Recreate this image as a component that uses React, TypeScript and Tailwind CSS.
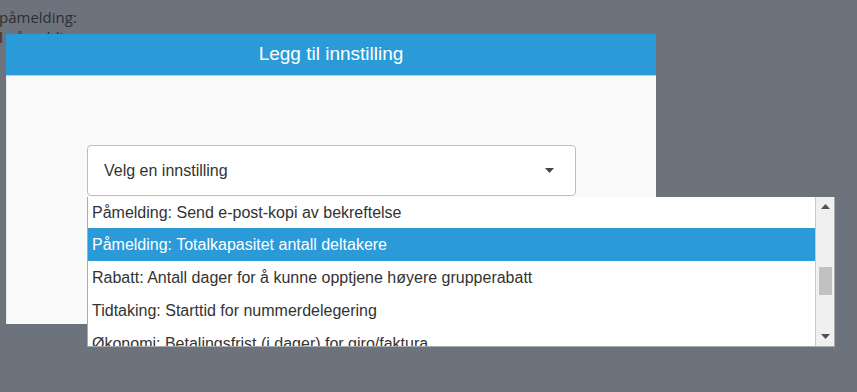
import React from "react";

const items = [
  "Påmelding: Send e-post-kopi av bekreftelse",
  "Påmelding: Totalkapasitet antall deltakere",
  "Rabatt: Antall dager for å kunne opptjene høyere grupperabatt",
  "Tidtaking: Starttid for nummerdelegering",
  "Økonomi: Betalingsfrist (i dager) for giro/faktura",
];

export default function App() {
  return (
    <div className="relative w-[857px] h-[392px] overflow-hidden bg-[#6c737c]">
      <div className="pt-[7px] text-[15px] leading-[20px] text-[#2b2f33] -ml-[1px]" style={{ fontFamily: '"Open Sans", sans-serif' }}>
        <div>påmelding:</div>
        <div className="-mt-[0px]">l påmelding</div>
      </div>

      {/* Modal */}
      <div className="absolute left-[6px] top-[34px] w-[650px] h-[290px] bg-[#fafafa] flex flex-col" style={{ fontFamily: '"Liberation Sans", Arial, sans-serif' }}>
        <div className="h-[42px] bg-[#2a9ad9] border-b border-[#c9c9c9] flex items-center justify-center text-white text-[19px]">
          Legg til innstilling
        </div>
        <div className="flex-1 border-l border-[#e8e8e8] pl-[80px] pt-[69px]">
          <div className="w-[489px] h-[51px] bg-white border border-[#bdbdbd] rounded-[4px] flex items-center justify-between pl-[16px] pr-[21px] text-[16px] text-[#333]">
            <span>Velg en innstilling</span>
            <svg width="9" height="5" viewBox="0 0 9 5"><path d="M0 0h9L4.5 5z" fill="#444" /></svg>
          </div>
        </div>
      </div>

      {/* Dropdown list */}
      <div className="absolute left-[87px] top-[197px] w-[748px] h-[150px] bg-white border-l border-r border-b border-[#a9a9a9] flex" style={{ fontFamily: '"Liberation Sans", Arial, sans-serif' }}>
        <div className="flex-1 overflow-hidden">
          {items.map((t, i) => (
            <div
              key={t}
              className={
                (i === 0 ? "h-[31px] " : "h-[33px] ") +
                (i === 1 ? "bg-[#2a9ad9] text-white " : "text-[#333] ") +
                "flex items-center pl-[4px] text-[16px] whitespace-nowrap"
              }
            >
              {t}
            </div>
          ))}
        </div>
        <div className="w-[19px] h-full bg-[#f0f0f0] border-l border-[#c8c8c8] flex flex-col items-center justify-between py-[7px]">
          <svg width="9" height="5" viewBox="0 0 9 5"><path d="M4.5 0L9 5H0z" fill="#505050" /></svg>
          <div className="w-[13px] h-[28px] bg-[#c1c1c1] mt-[58px]" />
          <div className="flex-1" />
          <svg width="9" height="5" viewBox="0 0 9 5"><path d="M0 0h9L4.5 5z" fill="#505050" /></svg>
        </div>
      </div>
    </div>
  );
}
